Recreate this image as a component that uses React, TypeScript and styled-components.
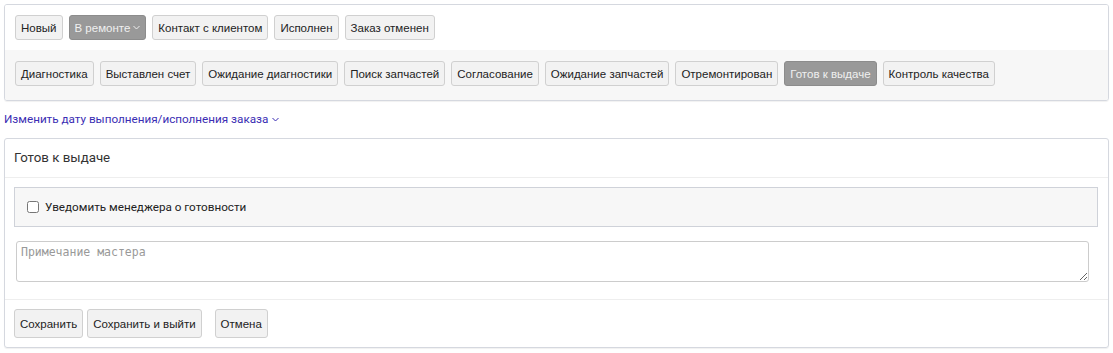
import styled, { createGlobalStyle } from "styled-components"

const GlobalStyle = createGlobalStyle`
  body {
    margin: 0;
    background: #fff;
    font-family: "Liberation Sans", Arial, sans-serif;
    color: #222;
  }
`

const Page = styled.div`
  padding: 4px;
  display: flex;
  flex-direction: column;
`

const StatusPanel = styled.div`
  border: 1px solid #d5d8df;
  border-radius: 3px;
  box-shadow: 0 1px 1px rgba(0, 0, 0, 0.06);
  overflow: hidden;
`

const StatusRow = styled.div<{ $muted?: boolean }>`
  display: flex;
  gap: 6px;
  padding: ${(p) => (p.$muted ? "11px 10px 14px" : "10px 10px 10px")};
  background: ${(p) => (p.$muted ? "#f7f7f7" : "#fff")};
`

const StatusButton = styled.button<{ $active?: boolean }>`
  height: 25px;
  padding: 0 5px;
  display: inline-flex;
  align-items: center;
  gap: 3px;
  font-family: "Liberation Sans", Arial, sans-serif;
  font-size: 11.5px;
  color: ${(p) => (p.$active ? "#f0f0f0" : "#222")};
  background: ${(p) => (p.$active ? "#999" : "#f2f2f2")};
  border: 1px solid ${(p) => (p.$active ? "#8c8c8c" : "#d0d0d0")};
  border-radius: 3px;
  cursor: pointer;
`

const DateLink = styled.a`
  display: inline-flex;
  align-items: center;
  gap: 4px;
  align-self: flex-start;
  margin: 10px 0 11px;
  line-height: 16px;
  font-family: Roboto, "Liberation Sans", sans-serif;
  font-size: 11.7px;
  color: #3a2db3;
  text-decoration: none;
  cursor: pointer;
`

const Card = styled.div`
  border: 1px solid #d5d8df;
  border-radius: 3px;
  box-shadow: 0 1px 1px rgba(0, 0, 0, 0.06);
`

const CardHeader = styled.div`
  padding: 10px 9px;
  line-height: 18px;
  font-family: Roboto, "Liberation Sans", sans-serif;
  font-size: 13.3px;
  color: #333;
  border-bottom: 1px solid #eeeeee;
`

const CardBody = styled.div`
  padding: 9px 10px 17px 9px;
  display: flex;
  flex-direction: column;
  gap: 14px;
`

const NotifyBox = styled.label`
  height: 38px;
  display: flex;
  align-items: center;
  gap: 6px;
  padding: 0 12px;
  background: #f7f7f7;
  border: 1px solid #cfd2d9;
  font-family: Roboto, "Liberation Sans", sans-serif;
  font-size: 11.7px;
  color: #222;

  input {
    margin: 0;
    width: 12px;
    height: 12px;
  }
`

const NoteArea = styled.textarea`
  height: 41px;
  margin: 0 9px 0 2px;
  padding: 3px 4px;
  box-sizing: border-box;
  border: 1px solid #cccccc;
  border-radius: 3px;
  font-family: "DejaVu Sans Mono", "Liberation Mono", monospace;
  font-size: 11.5px;
  resize: vertical;

  &::placeholder {
    color: #999;
  }
`

const CardFooter = styled.div`
  display: flex;
  gap: 4px;
  padding: 9px;
  border-top: 1px solid #eeeeee;
`

const FooterButton = styled.button<{ $spaced?: boolean }>`
  height: 29px;
  padding: 0 5px;
  margin-left: ${(p) => (p.$spaced ? "9px" : "0")};
  font-family: "Liberation Sans", Arial, sans-serif;
  font-size: 11.5px;
  color: #222;
  background: #f2f2f2;
  border: 1px solid #d0d0d0;
  border-radius: 3px;
  cursor: pointer;
`

const Chevron = ({ color }: { color: string }) => (
  <svg width="7" height="5" viewBox="0 0 7 5" fill="none">
    <path d="M0.5 1 L3.5 4 L6.5 1" stroke={color} strokeWidth="1" />
  </svg>
)

const mainStatuses = ["Новый", "В ремонте", "Контакт с клиентом", "Исполнен", "Заказ отменен"]
const subStatuses = [
  "Диагностика",
  "Выставлен счет",
  "Ожидание диагностики",
  "Поиск запчастей",
  "Согласование",
  "Ожидание запчастей",
  "Отремонтирован",
  "Готов к выдаче",
  "Контроль качества",
]

const App = () => {
  return (
    <Page>
      <GlobalStyle />
      <StatusPanel>
        <StatusRow>
          {mainStatuses.map((s) => (
            <StatusButton key={s} $active={s === "В ремонте"}>
              {s}
              {s === "В ремонте" && <Chevron color="#eee" />}
            </StatusButton>
          ))}
        </StatusRow>
        <StatusRow $muted>
          {subStatuses.map((s) => (
            <StatusButton key={s} $active={s === "Готов к выдаче"}>
              {s}
            </StatusButton>
          ))}
        </StatusRow>
      </StatusPanel>

      <DateLink>
        Изменить дату выполнения/исполнения заказа
        <Chevron color="#3a2db3" />
      </DateLink>

      <Card>
        <CardHeader>Готов к выдаче</CardHeader>
        <CardBody>
          <NotifyBox>
            <input type="checkbox" />
            Уведомить менеджера о готовности
          </NotifyBox>
          <NoteArea placeholder="Примечание мастера" />
        </CardBody>
        <CardFooter>
          <FooterButton>Сохранить</FooterButton>
          <FooterButton>Сохранить и выйти</FooterButton>
          <FooterButton $spaced>Отмена</FooterButton>
        </CardFooter>
      </Card>
    </Page>
  )
}

export default App
